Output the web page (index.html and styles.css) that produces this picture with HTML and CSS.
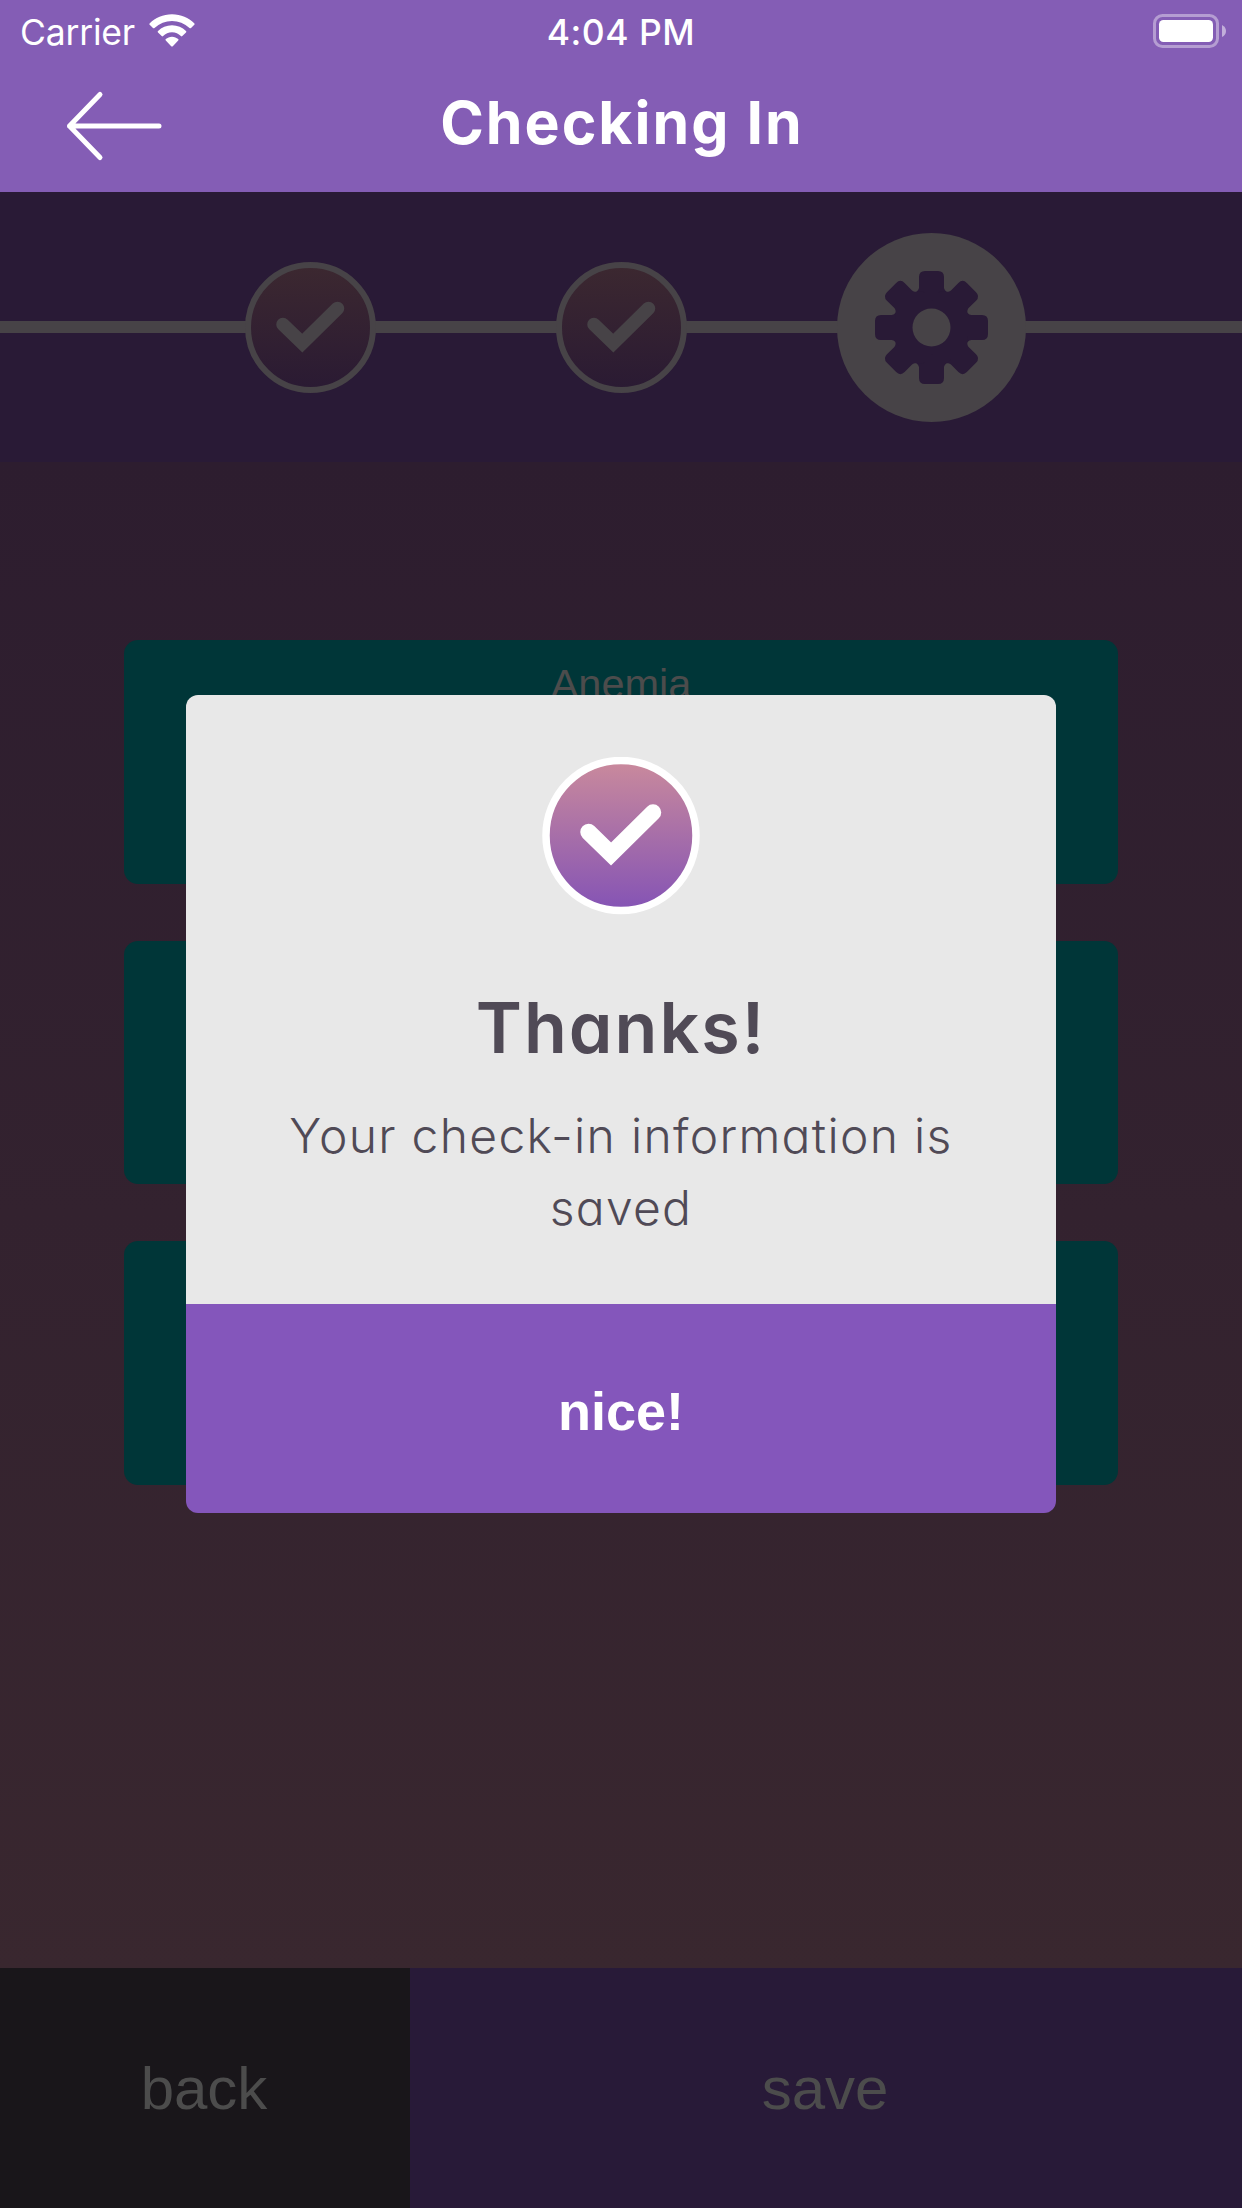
FILE: index.html
```
<!DOCTYPE html>
<html lang="en">
<head>
<meta charset="utf-8">
<title>Checking In</title>
<link rel="stylesheet" href="styles.css">
</head>
<body>
<div class="screen">
  <header class="header">
    <div class="status">
      <div class="status-left">
        <span class="carrier">Carrier</span>
        <svg class="wifi" viewBox="0 0 46 34" width="46" height="34">
          <path d="M23 0.3C32 0.3 39.700 4 45.200 9.200C45.800 9.800 45.800 10.200 45.300 10.700L42 13.900C41.500 14.400 41 14.400 40.500 13.900C35.500 9.300 29.500 7 23 7S10.500 9.300 5.500 13.900C5 14.400 4.500 14.400 4 13.900L0.700 10.700C0.200 10.200 0.200 9.800 0.800 9.200C6.300 4 14 0.300 23 0.300Z"/>
          <path d="M23 11.300C28.500 11.300 33.300 13.500 37 17C37.500 17.500 37.500 18 37 18.500L33.300 22C32.800 22.500 32.400 22.500 31.900 22C29.500 19.700 26.500 18.300 23 18.300S16.500 19.700 14.100 22C13.600 22.500 13.200 22.500 12.700 22L9 18.500C8.500 18 8.500 17.500 9 17C12.700 13.500 17.500 11.300 23 11.300Z"/>
          <path d="M23 22.700C25.500 22.700 27.500 23.600 29.200 25.100C29.700 25.600 29.700 26 29.200 26.500L23.800 32.200C23.300 32.700 22.700 32.700 22.200 32.200L16.800 26.500C16.300 26 16.300 25.600 16.800 25.100C18.500 23.600 20.500 22.700 23 22.700Z"/>
        </svg>
      </div>
      <span class="time">4:04 PM</span>
      <svg class="battery" viewBox="0 0 74 34" width="74" height="34">
        <rect x="1.500" y="1.500" width="63" height="31" rx="8" fill="none" stroke="#fff" stroke-opacity=".4" stroke-width="3"/>
        <rect x="6" y="6" width="54" height="22" rx="4.500" fill="#fff"/>
        <path d="M69 11Q73 13 73 17T69 23Z" fill="#fff" fill-opacity=".5"/>
      </svg>
    </div>
    <div class="navbar">
      <svg class="arrow" viewBox="0 0 98 72" width="98" height="72">
        <path d="M35 4.500L4.500 36L35 67.500M4.500 36H94" fill="none" stroke="#fff" stroke-width="5" stroke-linecap="round" stroke-linejoin="round"/>
      </svg>
      <h1 class="title">Checking In</h1>
    </div>
  </header>

  <div class="progress">
    <svg class="step" viewBox="0 0 131 131" width="131" height="131">
      <defs><linearGradient id="dim" x1="0" y1="0" x2="0" y2="1"><stop offset="0" stop-color="#3c2830"/><stop offset="1" stop-color="#2a1a33"/></linearGradient></defs>
      <circle cx="65.500" cy="65.500" r="62.500" fill="url(#dim)" stroke="#474347" stroke-width="6"/>
      <path class="tick" d="M38 62.500L57.300 81L92.500 46.400" stroke="#474347" stroke-width="13.500"/>
    </svg>
    <svg class="step" viewBox="0 0 131 131" width="131" height="131">
      <circle cx="65.500" cy="65.500" r="62.500" fill="url(#dim)" stroke="#474347" stroke-width="6"/>
      <path class="tick" d="M38 62.500L57.300 81L92.500 46.400" stroke="#474347" stroke-width="13.500"/>
    </svg>
    <svg class="step" viewBox="-94.500 -94.500 189 189" width="189" height="189">
      <defs>
        <path id="tooth" d="M-19.500 -32C-16 -35 -12.500 -37 -12.500 -40V-50.500Q-12.500 -56.500 -6.500 -56.500H6.500Q12.500 -56.500 12.500 -50.500V-40C12.500 -37 16 -35 19.500 -32V0H-19.500Z"/>
      </defs>
      <circle r="94.500" fill="#474347"/>
      <g fill="#291a36">
        <circle r="36.500"/>
        <use href="#tooth"/><use href="#tooth" transform="rotate(45)"/><use href="#tooth" transform="rotate(90)"/><use href="#tooth" transform="rotate(135)"/>
        <use href="#tooth" transform="rotate(180)"/><use href="#tooth" transform="rotate(225)"/><use href="#tooth" transform="rotate(270)"/><use href="#tooth" transform="rotate(315)"/>
      </g>
      <circle r="19" fill="#474347"/>
    </svg>
  </div>

  <main class="content">
    <div class="card">Anemia</div>
    <div class="card"></div>
    <div class="card"></div>
  </main>

  <footer class="footer">
    <div class="back">back</div>
    <div class="save">save</div>
  </footer>

  <section class="modal">
    <div class="modal-body">
      <svg class="badge" viewBox="0 0 158 158" width="158" height="158">
        <defs><linearGradient id="lit" x1="0" y1="0" x2="0" y2="1"><stop offset="0" stop-color="#ca8a9c"/><stop offset="1" stop-color="#8453b5"/></linearGradient></defs>
        <circle cx="79" cy="78.500" r="75" fill="url(#lit)" stroke="#fff" stroke-width="7.500"/>
        <path class="tick" d="M46.500 75L69 97L111 55.500" stroke="#fff" stroke-width="16.500"/>
      </svg>
      <h2 class="modal-title">Thanks!</h2>
      <p class="modal-text">Your check-in information is<br>saved</p>
    </div>
    <div class="modal-button">nice!</div>
  </section>
</div>
</body>
</html>
```
FILE: styles.css
```
* { box-sizing: border-box; }
body { margin: 0; }
h1, h2, p { margin: 0; }

.screen {
  position: relative;
  display: flex;
  flex-direction: column;
  width: 1242px;
  height: 2208px;
  overflow: hidden;
  font-family: "Liberation Sans", sans-serif;
}

.header {
  height: 192px;
  background: #845db5;
  color: #fff;
  font-family: Inter, sans-serif;
}
.status {
  display: grid;
  grid-template-columns: 1fr auto 1fr;
  align-items: center;
  height: 60px;
  padding: 2px 15px 0 20px;
  font-size: 35.500px;
  line-height: 58px;
}
.status-left { display: flex; align-items: center; gap: 14px; }
.carrier { padding-top: 2px; letter-spacing: -0.200px; }
.wifi { fill: #fff; margin-top: -2px; }
.time { padding-top: 2px; margin: 0 5px 0 0; font-weight: 500; letter-spacing: 0.500px; }
.battery { justify-self: end; margin-top: -2px; }
.navbar {
  display: grid;
  grid-template-columns: 98px 1fr 98px;
  align-items: center;
  height: 132px;
  padding: 0 65px;
}
.title {
  padding-bottom: 6px;
  text-align: center;
  text-indent: 2px;
  font-size: 59px;
  line-height: 72px;
  font-weight: 700;
  letter-spacing: 2px;
  white-space: nowrap;
}

.progress {
  display: flex;
  align-items: center;
  height: 270px;
  background: linear-gradient(#474347, #474347) 0 129px / 100% 12px no-repeat #291a36;
}
.step { flex: none; }
.step:nth-child(1) { margin-left: 245px; }
.step:nth-child(2) { margin-left: 180px; }
.step:nth-child(3) { margin-left: 150px; }
.tick { fill: none; stroke-linecap: round; stroke-linejoin: miter; }

.content {
  flex: 1;
  display: flex;
  flex-direction: column;
  gap: 57px;
  padding: 178px 124px 0;
  background: linear-gradient(#2d1d2f, #39272f);
}
.card {
  height: 243.500px;
  padding-top: 20px;
  border-radius: 14px;
  background: #003638;
  color: #4c4c4c;
  font-size: 41.500px;
  line-height: 48px;
  text-align: center;
}

.footer {
  display: flex;
  height: 240px;
  color: #4c4c4c;
  font-size: 60px;
  line-height: 242px;
  text-align: center;
}
.back { width: 410px; padding-right: 2px; background: #19161a; }
.save { flex: 1; padding-right: 2px; background: #281a38; }

.modal {
  position: absolute;
  left: 186px;
  top: 695px;
  width: 870px;
  height: 818px;
  border-radius: 12px;
  overflow: hidden;
}
.modal-body {
  display: flex;
  flex-direction: column;
  align-items: center;
  height: 609px;
  padding-top: 62px;
  background: #e8e8e8;
  color: #504a56;
  font-family: Inter, sans-serif;
  font-feature-settings: "cv11";
  text-align: center;
}
.modal-title {
  margin-top: 68px;
  font-size: 70px;
  line-height: 90px;
  font-weight: 600;
  letter-spacing: 2px;
}
.modal-text {
  margin-top: 27px;
  font-size: 48px;
  line-height: 72px;
  font-weight: 300;
  letter-spacing: 1.300px;
}
.modal-button {
  height: 209px;
  background: #8456bb;
  color: #fff;
  font-size: 54px;
  line-height: 214px;
  font-weight: 700;
  text-align: center;
}
```
